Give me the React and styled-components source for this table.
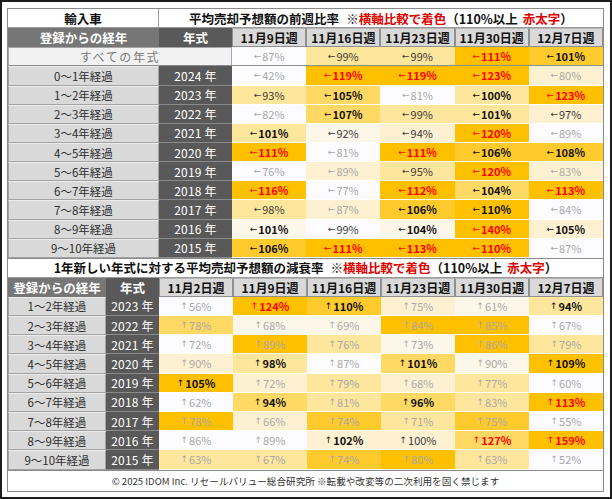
import React from "react";
import styled, { createGlobalStyle } from "styled-components";

const GlobalStyle = createGlobalStyle`
  html, body { margin: 0; padding: 0; background: #fff; }
  body { font-family: "Noto Sans CJK JP", "Noto Sans", sans-serif; }
`;

// heat colours (white -> gold)
const W = "#fcfcfe";
const C0 = "#fdf7ea";
const C = "#fef1d2";
const Y1 = "#ffe69d";
const Y2 = "#ffd964";
const O1 = "#ffca2c";
const O = "#ffc000";

const weekly = {
  weeks: ["11月9日週", "11月16日週", "11月23日週", "11月30日週", "12月7日週"],
  all: [["87", W, "g"], ["99", Y1, "d"], ["99", Y1, "d"], ["111", O, "r"], ["101", O1, "b"]],
  rows: [
    ["0～1年経過", "2024", [["42", W, "g"], ["119", O, "r"], ["119", O, "r"], ["123", O, "r"], ["80", C, "g"]]],
    ["1～2年経過", "2023", [["93", Y1, "d"], ["105", Y2, "b"], ["81", W, "g"], ["100", Y1, "b"], ["123", O, "r"]]],
    ["2～3年経過", "2022", [["82", W, "g"], ["107", Y2, "b"], ["99", Y1, "d"], ["101", Y1, "b"], ["97", C, "d"]]],
    ["3～4年経過", "2021", [["101", Y1, "b"], ["92", C0, "d"], ["94", C, "d"], ["120", O, "r"], ["89", W, "g"]]],
    ["4～5年経過", "2020", [["111", O, "r"], ["81", W, "g"], ["111", O, "r"], ["106", O1, "b"], ["108", O1, "b"]]],
    ["5～6年経過", "2019", [["76", W, "g"], ["89", C, "g"], ["95", Y1, "d"], ["120", O, "r"], ["83", C, "g"]]],
    ["6～7年経過", "2018", [["116", O, "r"], ["77", W, "g"], ["112", O, "r"], ["104", Y2, "b"], ["113", O, "r"]]],
    ["7～8年経過", "2017", [["98", Y1, "d"], ["87", C, "g"], ["106", O1, "b"], ["110", O, "b"], ["84", W, "g"]]],
    ["8～9年経過", "2016", [["101", C0, "b"], ["99", W, "d"], ["104", C0, "b"], ["140", O, "r"], ["105", C, "b"]]],
    ["9～10年経過", "2015", [["106", O1, "b"], ["111", O, "r"], ["113", O, "r"], ["110", O, "r"], ["87", W, "g"]]],
  ],
};

const decay = {
  weeks: ["11月2日週", "11月9日週", "11月16日週", "11月23日週", "11月30日週", "12月7日週"],
  rows: [
    ["1～2年経過", "2023", [["56", W, "g"], ["124", O, "r"], ["110", O1, "b"], ["75", C, "g"], ["61", C0, "g"], ["94", Y1, "b"]]],
    ["2～3年経過", "2022", [["78", Y2, "g"], ["68", C0, "g"], ["69", C0, "g"], ["84", O, "g"], ["85", O, "g"], ["67", W, "g"]]],
    ["3～4年経過", "2021", [["72", W, "g"], ["89", O, "g"], ["76", Y1, "g"], ["73", C0, "g"], ["86", O, "g"], ["79", Y1, "g"]]],
    ["4～5年経過", "2020", [["90", C, "g"], ["98", Y1, "b"], ["87", W, "g"], ["101", Y2, "b"], ["90", C0, "g"], ["109", O, "b"]]],
    ["5～6年経過", "2019", [["105", O, "b"], ["72", C, "g"], ["79", Y1, "g"], ["68", C, "g"], ["77", Y1, "g"], ["60", W, "g"]]],
    ["6～7年経過", "2018", [["62", W, "g"], ["94", Y2, "b"], ["81", Y1, "g"], ["96", Y2, "b"], ["83", Y1, "g"], ["113", O, "r"]]],
    ["7～8年経過", "2017", [["78", O, "g"], ["66", C, "g"], ["74", O1, "g"], ["71", Y1, "g"], ["75", O1, "g"], ["55", W, "g"]]],
    ["8～9年経過", "2016", [["86", W, "g"], ["89", W, "g"], ["102", C, "b"], ["100", C, "d"], ["127", Y2, "r"], ["159", O, "r"]]],
    ["9～10年経過", "2015", [["63", Y1, "g"], ["67", Y1, "g"], ["74", O1, "g"], ["80", O, "g"], ["63", Y1, "g"], ["52", W, "g"]]],
  ],
};

const textTone = {
  g: { color: "#a9a9a9", weight: 400 },
  d: { color: "#3a3a3a", weight: 400 },
  b: { color: "#111", weight: 700 },
  r: { color: "#ff0000", weight: 700 },
};

const headTone = {
  mid: { bg: "#767676", color: "#fff", border: "#767676" },
  dark: { bg: "#595959", color: "#fff", border: "#595959" },
  week: { bg: "#d9d9d9", color: "#111", border: "#8f8f8f" },
};

const Frame = styled.div`
  width: 612px;
  height: 499px;
  box-sizing: border-box;
  border: 2px solid #1c1c1c;
  padding: 6px 6px 6px 5px;
  background: #fff;
`;

const Table = styled.div`
  display: flex;
  flex-direction: column;
  border: 1px solid #8a8a8a;
`;

const Section = styled.div`
  display: grid;
  grid-template-columns: ${(p) => p.$cols};
  grid-template-rows: ${(p) => p.$rows};
`;

const Cell = styled.div`
  box-sizing: border-box;
  display: flex;
  align-items: center;
  justify-content: center;
  white-space: nowrap;
  overflow: hidden;
`;

const TitleCell = styled(Cell)`
  grid-column: span ${(p) => p.$span || 1};
  background: #fff;
  border-bottom: 1px solid #9a9a9a;
  border-right: ${(p) => (p.$divider ? "1px solid #9a9a9a" : "none")};
  border-top: ${(p) => (p.$top ? "1px solid #8a8a8a" : "none")};
  font-size: 12.5px;
  font-weight: 700;
  color: #111;
`;

const Red = styled.span`
  color: #e00000;
`;

const Gap = styled.span`
  display: inline-block;
  width: ${(p) => p.$w}px;
`;

const HeadCell = styled(Cell)`
  background: ${(p) => headTone[p.$tone].bg};
  color: ${(p) => headTone[p.$tone].color};
  border: 1px solid ${(p) => headTone[p.$tone].border};
  border-top-color: ${(p) => (p.$tone === "week" ? "#b5b5b5" : headTone[p.$tone].border)};
  font-size: ${(p) => (p.$tone === "week" ? "12px" : "12.5px")};
  font-weight: 700;
`;

const AllCell = styled(Cell)`
  grid-column: span 2;
  background: #f2f2f2;
  border: 1px solid #a6a6a6;
  border-bottom-color: #8a8a8a;
  color: #7a7a7a;
  font-size: 12px;
  letter-spacing: 1.6px;
`;

const LabelCell = styled(Cell)`
  background: #d9d9d9;
  border: 1px solid #a3a3a3;
  border-top-color: #ececec;
  color: #2e2e2e;
  font-size: 11.5px;
`;

const YearCell = styled(Cell)`
  background: #595959;
  border-bottom: 1px solid #8a8a8a;
  color: #fff;
  font-size: 12px;
  letter-spacing: 0.2px;
`;

const ValueCell = styled(Cell)`
  background: ${(p) => p.$bg};
  border-bottom: 1px solid ${(p) => (p.$underline ? "#8f8f8f" : "#fff")};
  color: ${(p) => textTone[p.$tone].color};
  font-weight: ${(p) => textTone[p.$tone].weight};
  font-size: 11px;
`;

const Arrow = styled.span`
  font-family: "DejaVu Sans", sans-serif;
  font-weight: 400;
  font-size: 9px;
  margin-right: 1px;
`;

const Footer = styled.div`
  height: 21px;
  box-sizing: border-box;
  border-top: 1px solid #8a8a8a;
  display: flex;
  align-items: center;
  justify-content: center;
  font-size: 9.6px;
  color: #333;
  background: #fff;
`;

const Value = ({ cell, arrow, underline }) => {
  const [v, bg, tone] = cell;
  return (
    <ValueCell $bg={bg} $tone={tone} $underline={underline}>
      <Arrow>{arrow}</Arrow>
      {v}%
    </ValueCell>
  );
};

const Note = () => (
  <>
    <Gap $w={7} />※<Red>横軸比較で着色</Red>（110%以上<Gap $w={5} />
    <Red>赤太字</Red>）
  </>
);

export default function App() {
  return (
    <>
      <GlobalStyle />
      <Frame>
        <Table>
          <Section $cols="151px 73px repeat(5, 1fr)" $rows="repeat(13, 19.15px)">
            <TitleCell $divider>輸入車</TitleCell>
            <TitleCell $span={6}>
              平均売却予想額の前週比率
              <Note />
            </TitleCell>

            <HeadCell $tone="mid">登録からの経年</HeadCell>
            <HeadCell $tone="dark">年式</HeadCell>
            {weekly.weeks.map((w) => (
              <HeadCell key={w} $tone="week">
                {w}
              </HeadCell>
            ))}

            <AllCell>すべての年式</AllCell>
            {weekly.all.map((c, i) => (
              <Value key={i} cell={c} arrow="←" underline />
            ))}

            {weekly.rows.map(([label, year, cells]) => (
              <React.Fragment key={year}>
                <LabelCell>{label}</LabelCell>
                <YearCell>{year} 年</YearCell>
                {cells.map((c, i) => (
                  <Value key={i} cell={c} arrow="←" />
                ))}
              </React.Fragment>
            ))}
          </Section>

          <Section $cols="98px 53px repeat(6, 1fr)" $rows="20px 19px repeat(9, 19.2px)">
            <TitleCell $span={8} $top>
              1年新しい年式に対する平均売却予想額の減衰率
              <Note />
            </TitleCell>

            <HeadCell $tone="mid">登録からの経年</HeadCell>
            <HeadCell $tone="dark">年式</HeadCell>
            {decay.weeks.map((w) => (
              <HeadCell key={w} $tone="week">
                {w}
              </HeadCell>
            ))}

            {decay.rows.map(([label, year, cells]) => (
              <React.Fragment key={year}>
                <LabelCell>{label}</LabelCell>
                <YearCell>{year} 年</YearCell>
                {cells.map((c, i) => (
                  <Value key={i} cell={c} arrow="↑" />
                ))}
              </React.Fragment>
            ))}
          </Section>

          <Footer>
            © 2025 IDOM Inc. リセールバリュー総合研究所 ※転載や改変等の二次利用を固く禁じます
          </Footer>
        </Table>
      </Frame>
    </>
  );
}
